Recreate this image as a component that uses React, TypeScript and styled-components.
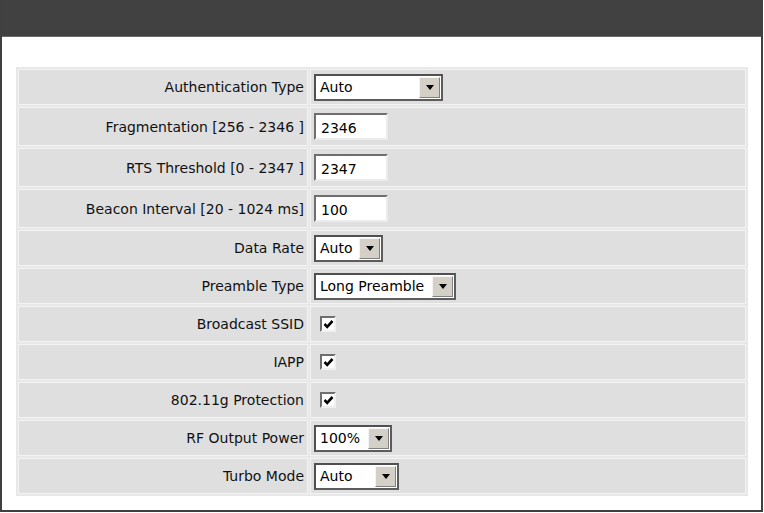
import React from "react";
import styled, { createGlobalStyle } from "styled-components";

const Global = createGlobalStyle`
  html, body { margin: 0; padding: 0; background: #ffffff; }
  body { font-family: "DejaVu Sans", Verdana, sans-serif; }
`;

const Frame = styled.div`
  width: 763px;
  height: 512px;
  box-sizing: border-box;
  border: 2px solid #404040;
  border-top: none;
  background: #ffffff;
`;

const Header = styled.div`
  height: 37px;
  background: #414141;
  border-bottom: 1px solid #6a6a6a;
  box-sizing: border-box;
`;

const Content = styled.div`
  padding: 30px 0 0 14px;
`;

const Table = styled.div`
  width: 732px;
  box-sizing: border-box;
  display: flex;
  flex-direction: column;
  gap: 2px;
  padding: 2px;
  background: #e8e8e8;
`;

const Row = styled.div<{ $h: number }>`
  display: grid;
  grid-template-columns: 290px 1fr;
  gap: 2px;
  height: ${(p) => p.$h}px;
`;

const Cell = styled.div<{ $label?: boolean }>`
  box-sizing: border-box;
  background: #dfdfdf;
  border: 1px solid #f3f3f3;
  display: flex;
  align-items: center;
  justify-content: ${(p) => (p.$label ? "flex-end" : "flex-start")};
  padding: ${(p) => (p.$label ? "0 3px 0 0" : "0 0 0 3px")};
  font-size: 14px;
  color: #111;
  white-space: nowrap;
`;

const SelectBox = styled.div<{ $w: number }>`
  width: ${(p) => p.$w}px;
  height: 27px;
  box-sizing: border-box;
  display: flex;
  border: 2px solid;
  border-color: #505050 #5c5c5c #5c5c5c #505050;
  background: #ffffff;
`;

const SelectText = styled.div`
  flex: 1;
  display: flex;
  align-items: center;
  padding-left: 4px;
  font-size: 14px;
  color: #000;
`;

const SelectButton = styled.div`
  width: 21px;
  box-sizing: border-box;
  margin: 1px;
  background: #d4d0c8;
  border: 1px solid;
  border-color: #f4f4f4 #808080 #808080 #f4f4f4;
  display: flex;
  align-items: center;
  justify-content: center;
`;

const Arrow = styled.div`
  width: 0;
  height: 0;
  border-left: 4px solid transparent;
  border-right: 4px solid transparent;
  border-top: 5px solid #000;
  margin-top: 1px;
`;

const TextInput = styled.div<{ $w: number }>`
  width: ${(p) => p.$w}px;
  height: 27px;
  box-sizing: border-box;
  border: 2px solid;
  border-color: #6e6e6e #ececec #ececec #6e6e6e;
  background: #ffffff;
  display: flex;
  align-items: center;
  padding-left: 5px;
  padding-top: 2px;
  font-size: 14px;
  color: #000;
`;

const CheckBox = styled.div`
  width: 16px;
  height: 16px;
  box-sizing: border-box;
  margin-left: 6px;
  border: 2px solid;
  border-color: #6e6e6e #f0f0f0 #f0f0f0 #6e6e6e;
  background: #ffffff;
  display: flex;
  align-items: center;
  justify-content: center;
`;

function Select({ value, width }: { value: string; width: number }) {
  return (
    <SelectBox $w={width}>
      <SelectText>{value}</SelectText>
      <SelectButton>
        <Arrow />
      </SelectButton>
    </SelectBox>
  );
}

function Check() {
  return (
    <CheckBox>
      <svg width="11" height="11" viewBox="0 0 11 11">
        <path d="M1.5 5 L4.2 7.8 L9.5 2" stroke="#000" strokeWidth="2.6" fill="none" />
      </svg>
    </CheckBox>
  );
}

type RowData = { label: string; h: number; control: React.ReactNode };

const rows: RowData[] = [
  { label: "Authentication Type", h: 36, control: <Select value="Auto" width={129} /> },
  { label: "Fragmentation [256 - 2346 ]", h: 39, control: <TextInput $w={74}>2346</TextInput> },
  { label: "RTS Threshold [0 - 2347 ]", h: 39, control: <TextInput $w={74}>2347</TextInput> },
  { label: "Beacon Interval [20 - 1024 ms]", h: 39, control: <TextInput $w={74}>100</TextInput> },
  { label: "Data Rate", h: 36, control: <Select value="Auto" width={69} /> },
  { label: "Preamble Type", h: 36, control: <Select value="Long Preamble" width={142} /> },
  { label: "Broadcast SSID", h: 36, control: <Check /> },
  { label: "IAPP", h: 36, control: <Check /> },
  { label: "802.11g Protection", h: 36, control: <Check /> },
  { label: "RF Output Power", h: 36, control: <Select value="100%" width={78} /> },
  { label: "Turbo Mode", h: 36, control: <Select value="Auto" width={85} /> },
];

export default function App() {
  return (
    <>
      <Global />
      <Frame>
        <Header />
        <Content>
          <Table>
            {rows.map((r) => (
              <Row key={r.label} $h={r.h}>
                <Cell $label>{r.label}</Cell>
                <Cell>{r.control}</Cell>
              </Row>
            ))}
          </Table>
        </Content>
      </Frame>
    </>
  );
}
